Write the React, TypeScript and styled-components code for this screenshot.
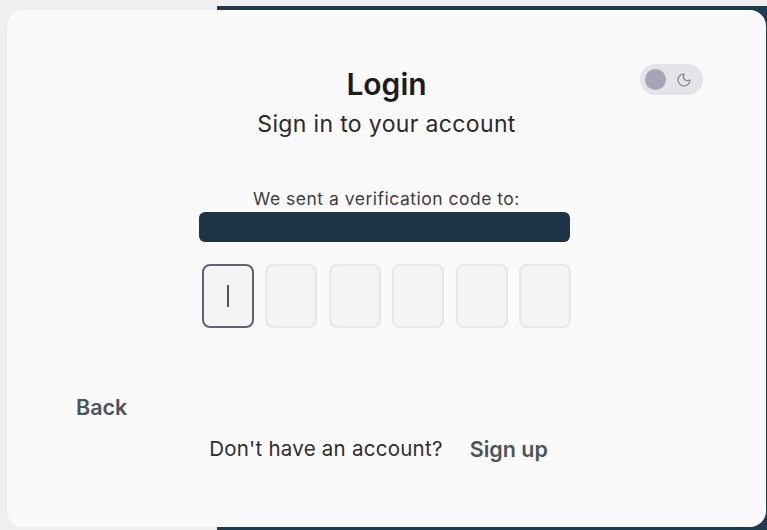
import React from "react";
import styled, { createGlobalStyle } from "styled-components";
import { Moon } from "lucide-react";

const Global = createGlobalStyle`
  html, body { margin: 0; padding: 0; }
  body { font-family: Inter, "Noto Sans", sans-serif; }
  * { box-sizing: border-box; }
`;

const Page = styled.div`
  width: 767px;
  height: 530px;
  overflow: hidden;
  padding: 10px 1px 3px 6px;
  background:
    linear-gradient(#efefef, #efefef) top left / 100% 6px no-repeat,
    linear-gradient(to right, #efefef 217px, #1e3a4d 217px);
`;

const Card = styled.main`
  height: 100%;
  background: #fafafa;
  border-radius: 16px;
  border-left: 1px solid #e8e8e8;
  padding: 54px 63px 0 63px;
  display: flex;
  flex-direction: column;
  align-items: center;
`;

const Header = styled.header`
  width: 100%;
  display: grid;
  grid-template-columns: 1fr auto 1fr;
  align-items: start;
`;

const TitleBlock = styled.div`
  grid-column: 2;
  display: flex;
  flex-direction: column;
  align-items: center;
  padding-top: 2px;
`;

const Title = styled.h1`
  margin: 0;
  font-size: 30px;
  line-height: 36px;
  font-weight: 600;
  color: #1c1c1e;
`;

const Subtitle = styled.p`
  margin: 7px 0 0;
  font-size: 23px;
  line-height: 30px;
  font-weight: 400;
  color: #2a2a2a;
  letter-spacing: 0.35px;
`;

const ToggleWrap = styled.div`
  grid-column: 3;
  justify-self: end;
  width: 63px;
  height: 31px;
  border-radius: 16px;
  background: #e4e3e8;
  display: flex;
  align-items: center;
  padding: 0 5px;
  gap: 10px;
  color: #7a7a80;
`;

const Knob = styled.span`
  width: 21px;
  height: 21px;
  border-radius: 50%;
  background: #a8a4b8;
  flex: none;
`;

const Sent = styled.p`
  margin: 49px 0 0;
  font-size: 17.5px;
  line-height: 22px;
  color: #3e3e3e;
  letter-spacing: 0.5px;
`;

const Masked = styled.div`
  margin: 2px 4px 0 0;
  width: 371px;
  height: 30px;
  border-radius: 6px;
  background: #1e3448;
`;

const OtpRow = styled.div`
  margin-top: 22px;
  display: flex;
  gap: 11.5px;
`;

const OtpBox = styled.div<{ $active?: boolean }>`
  width: 52px;
  height: 64px;
  border-radius: 8px;
  background: #f4f4f4;
  border: 2px solid ${(p) => (p.$active ? "#675d74" : "#e6e6e6")};
  display: flex;
  align-items: center;
  justify-content: center;
`;

const Caret = styled.span`
  width: 2px;
  height: 22px;
  background: #4a5556;
`;

const BackRow = styled.div`
  width: 100%;
  margin-top: 66px;
  padding-left: 6px;
`;

const BackButton = styled.button`
  border: none;
  background: none;
  padding: 0;
  font-family: inherit;
  font-size: 21.5px;
  line-height: 26px;
  font-weight: 600;
  color: #4b555b;
  cursor: pointer;
`;

const Footer = styled.div`
  margin-top: 16px;
  padding-right: 16px;
  display: flex;
  align-items: center;
  gap: 27px;
  line-height: 26px;
`;

const Prompt = styled.span`
  font-size: 20.5px;
  letter-spacing: 0.25px;
  color: #2e2e2e;
`;

const SignUp = styled.a`
  font-size: 21.5px;
  font-weight: 600;
  color: #4b555b;
  text-decoration: none;
`;

export default function App() {
  return (
    <>
      <Global />
      <Page>
        <Card>
          <Header>
            <TitleBlock>
              <Title>Login</Title>
              <Subtitle>Sign in to your account</Subtitle>
            </TitleBlock>
            <ToggleWrap>
              <Knob />
              <Moon size={16} strokeWidth={1.6} />
            </ToggleWrap>
          </Header>
          <Sent>We sent a verification code to:</Sent>
          <Masked />
          <OtpRow>
            {[0, 1, 2, 3, 4, 5].map((i) => (
              <OtpBox key={i} $active={i === 0}>
                {i === 0 && <Caret />}
              </OtpBox>
            ))}
          </OtpRow>
          <BackRow>
            <BackButton>Back</BackButton>
          </BackRow>
          <Footer>
            <Prompt>Don't have an account?</Prompt>
            <SignUp href="#">Sign up</SignUp>
          </Footer>
        </Card>
      </Page>
    </>
  );
}
